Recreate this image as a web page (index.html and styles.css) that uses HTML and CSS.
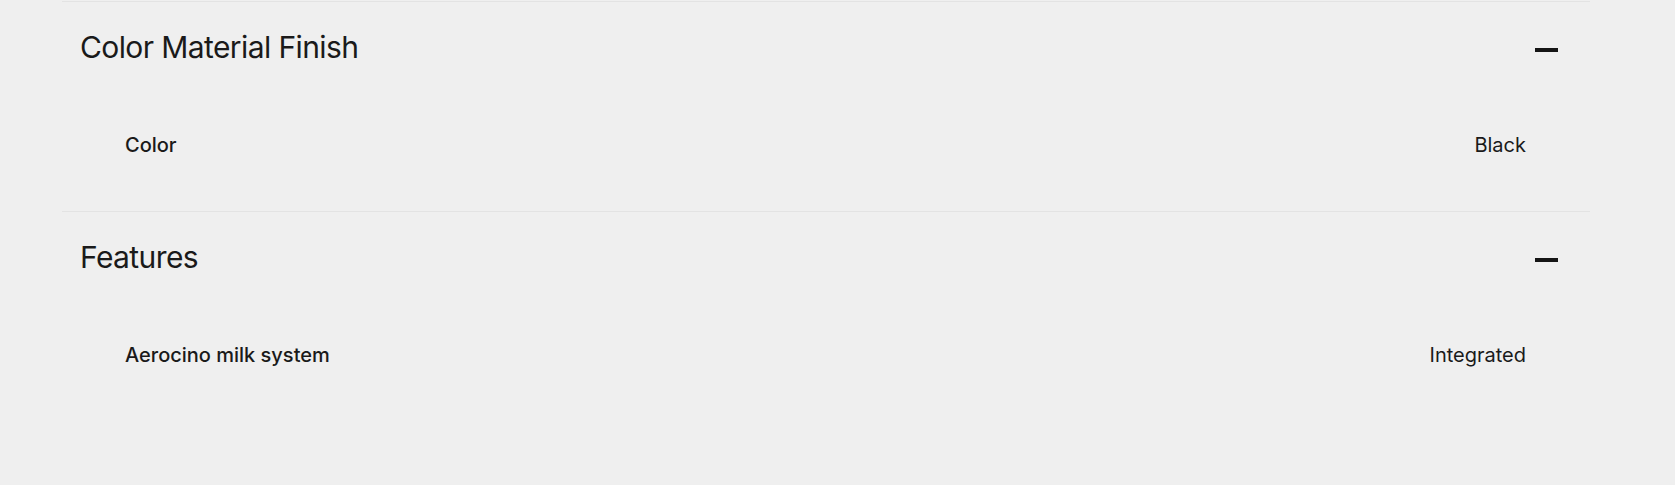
FILE: index.html
```html
<!DOCTYPE html>
<html lang="en">
<head>
<meta charset="utf-8">
<title>Specifications</title>
<link rel="stylesheet" href="styles.css">
</head>
<body>
<div class="specs">
  <section class="group">
    <div class="group-head">
      <h2 class="group-title">Color Material Finish</h2>
      <span class="toggle" aria-hidden="true"></span>
    </div>
    <div class="group-body">
      <div class="row"><span class="label">Color</span><span class="value">Black</span></div>
    </div>
  </section>
  <section class="group">
    <div class="group-head">
      <h2 class="group-title">Features</h2>
      <span class="toggle" aria-hidden="true"></span>
    </div>
    <div class="group-body">
      <div class="row"><span class="label">Aerocino milk system</span><span class="value">Integrated</span></div>
    </div>
  </section>
</div>
</body>
</html>
```
FILE: styles.css
```css
html, body {
  margin: 0;
  padding: 0;
  background: #efefef;
}
body {
  padding-top: 1px;
  font-family: Inter, "Noto Sans", sans-serif;
  color: #1a1a1a;
}
.specs {
  margin-left: 62px;
  width: 1528px;
}
.group {
  border-top: 1px solid #e3e3e3;
}
.group-head {
  display: flex;
  justify-content: space-between;
  align-items: center;
  padding: 27px 32px 34px 18px;
}
.group-title {
  margin: 0;
  font-size: 30px;
  line-height: 36px;
  font-weight: 400;
  letter-spacing: -0.6px;
}
.toggle {
  display: block;
  width: 23px;
  height: 4px;
  background: #151515;
  margin-top: 5px;
}
.group-body {
  padding: 34px 64px 54px 63px;
}
.row {
  display: flex;
  justify-content: space-between;
  font-size: 20px;
  line-height: 24px;
}
.label {
  font-weight: 500;
}
.value {
  font-weight: 400;
}
```
